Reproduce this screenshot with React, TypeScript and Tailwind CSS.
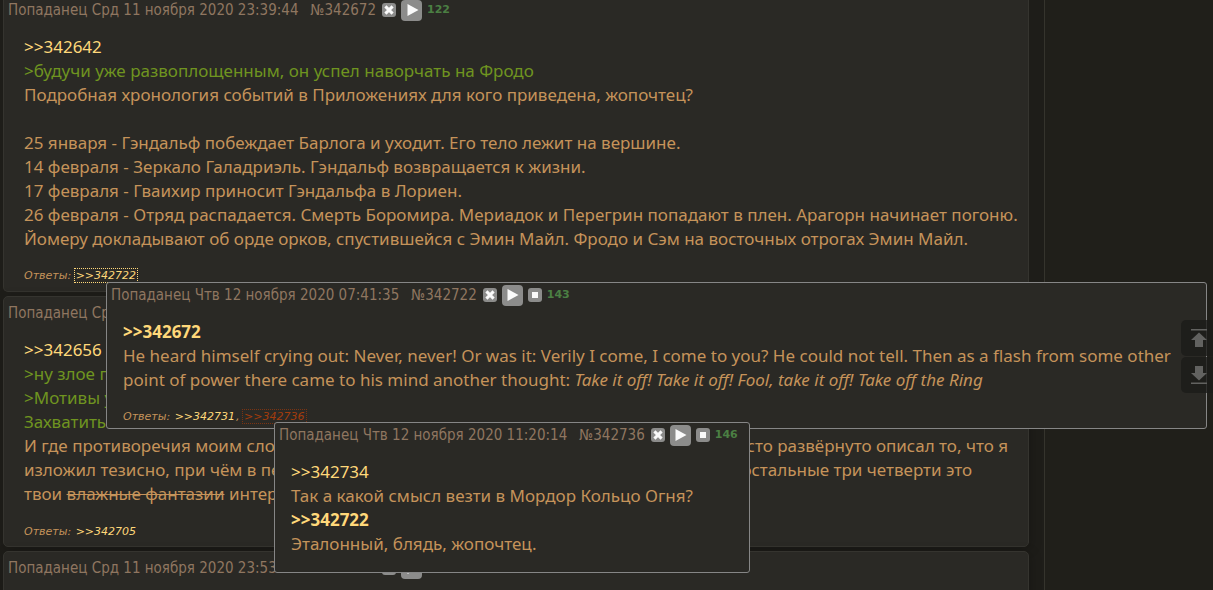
import React from "react";

const bodyText = "font-['Noto_Sans',sans-serif] text-[17px] leading-6 text-[#c5935a]";

function PostButton({ kind }: { kind: "hide" | "play" | "stop" }) {
  const label = { hide: "Скрыть пост", play: "Ответить на пост", stop: "Закрепить пост" }[kind];
  const big = kind === "play";
  return (
    <button
      type="button"
      aria-label={label}
      className={
        big
          ? "flex size-[21px] shrink-0 items-center justify-center rounded bg-[#8c8c8b]"
          : "flex size-3.5 shrink-0 items-center justify-center rounded-[3px] bg-[#8c8c8b]"
      }
    >
      {kind === "hide" && (
        <svg viewBox="0 0 14 14" className="size-3.5" stroke="#fafafa" strokeWidth="3">
          <path d="M3.4 3.4l7.2 7.2M10.6 3.4l-7.2 7.2" />
        </svg>
      )}
      {kind === "play" && (
        <svg viewBox="0 0 20 20" className="size-5" fill="#fafafa">
          <path d="M5.5 4l11 6-11 6z" />
        </svg>
      )}
      {kind === "stop" && (
        <svg viewBox="0 0 14 14" className="size-3.5" fill="#fafafa">
          <path d="M4 4h6v6H4z" />
        </svg>
      )}
    </button>
  );
}

function PostHeader({ date, id, count, pinned }: { date: string; id: string; count: string; pinned?: boolean }) {
  return (
    <header className="flex h-5 items-center whitespace-nowrap px-1 font-['DejaVu_Sans_Condensed','DejaVu_Sans',sans-serif] text-[15px] text-[#8f7660]">
      <span>Попаданец {date}</span>
      <a href={"#" + id} className="ml-3">№{id}</a>
      <span className="ml-1.5 flex items-center gap-[5px]">
        <PostButton kind="hide" />
        <PostButton kind="play" />
        {pinned && <PostButton kind="stop" />}
      </span>
      <span className="ml-[5px] font-['DejaVu_Sans',sans-serif] text-[11px] font-bold text-[#4b7f43]">{count}</span>
    </header>
  );
}

function Ref({ id, bold }: { id: string; bold?: boolean }) {
  return (
    <a href={"#" + id} className={bold ? "font-bold text-[#ffd87a]" : "text-[#ffd87a]"}>
      &gt;&gt;{id}
    </a>
  );
}

function Replies({ children }: { children: React.ReactNode }) {
  return (
    <p className="font-['DejaVu_Sans',sans-serif] text-[11px] italic leading-4 text-[#c5935a]">
      Ответы: {children}
    </p>
  );
}

function Quote({ children }: { children: React.ReactNode }) {
  return <span className="block whitespace-nowrap text-[#6f9420]">&gt;{children}</span>;
}

function SplitLine({ left, right }: { left: string; right: string }) {
  return (
    <div className="flex justify-between whitespace-nowrap">
      <span>{left}</span>
      <span>{right}</span>
    </div>
  );
}

const card =
  "rounded-[5px] border border-[#35342f] bg-[#2a2925] shadow-[2px_2px_12px_rgba(0,0,0,0.2)]";
const popup = "absolute rounded-[3px] border border-[#868686] bg-[#2a2925]";

export default function App() {
  return (
    <div className="relative flex h-screen overflow-hidden bg-[#201f1a]">
      <main className="min-w-0 flex-1 border-r border-[#35342d] bg-[#1e1d19] pl-[3px] pr-[15px]">
        <div className="flex flex-col gap-1">
          <article className="rounded-b-[5px] border border-t-0 border-[#35342f] bg-[#2a2925]">
            <PostHeader date="Срд 11 ноября 2020 23:39:44" id="342672" count="122" />
            <div className={bodyText + " px-5 pt-[15px]"}>
              <Ref id="342642" />
              <Quote>будучи уже развоплощенным, он успел наворчать на Фродо</Quote>
              <p>Подробная хронология событий в Приложениях для кого приведена, жопочтец?</p>
              <p className="mt-6">25 января - Гэндальф побеждает Барлога и уходит. Его тело лежит на вершине.</p>
              <p>14 февраля - Зеркало Галадриэль. Гэндальф возвращается к жизни.</p>
              <p>17 февраля - Гваихир приносит Гэндальфа в Лориен.</p>
              <p className="-mr-4">
                26 февраля - Отряд распадается. Смерть Боромира. Мериадок и Перегрин попадают в плен. Арагорн начинает погоню.
              </p>
              <p className="-mr-4">
                Йомеру докладывают об орде орков, спустившейся с Эмин Майл. Фродо и Сэм на восточных отрогах Эмин Майл.
              </p>
            </div>
            <div className="px-5 pb-[7px] pt-[17px]">
              <Replies>
                <a href="#342722" className="px-px text-[#ffd87a] outline-1 outline-dotted outline-[#ffd87a]">
                  &gt;&gt;342722
                </a>
              </Replies>
            </div>
          </article>

          <article className={card + " pt-1.5"}>
            <PostHeader date="Срд 11 ноября 2020 23:44:10" id="342691" count="123" />
            <div className={bodyText + " px-5 pt-[15px]"}>
              <Ref id="342656" />
              <Quote>ну злое г</Quote>
              <Quote>Мотивы у</Quote>
              <span className="block text-[#6f9420]">Захватить её себе и постепенно</span>
              <SplitLine left="И где противоречия моим слов" right="просто развёрнуто описал то, что я" />
              <div className="pr-9">
                <SplitLine left="изложил тезисно, при чём в пе" right="остальные три четверти это" />
              </div>
              <p>
                твои <s className="decoration-1">влажные фантазии</s> интер
              </p>
            </div>
            <div className="px-5 pb-1.5 pt-[18px]">
              <Replies>
                <a href="#342705" className="px-px text-[#ffd87a]">&gt;&gt;342705</a>
              </Replies>
            </div>
          </article>

          <article className={card + " pb-20 pt-1.5"}>
            <PostHeader date="Срд 11 ноября 2020 23:53:12" id="342694" count="124" />
          </article>
        </div>
      </main>
      <aside className="w-[168px] shrink-0" />

      <article className={popup + " left-[106px] right-1.5 top-[282px] pt-0.5"}>
        <PostHeader date="Чтв 12 ноября 2020 07:41:35" id="342722" count="143" pinned />
        <div className={bodyText + " px-4 pt-[15px]"}>
          <Ref id="342672" bold />
          <p>
            He heard himself crying out: Never, never! Or was it: Verily I come, I come to you? He could not tell. Then
            as a flash from some other point of power there came to his mind another thought:{" "}
            <em>Take it off! Take it off! Fool, take it off! Take off the Ring</em>
          </p>
        </div>
        <div className="px-4 pb-[3px] pt-[17px]">
          <Replies>
            <a href="#342731" className="px-px text-[#ffd87a]">&gt;&gt;342731</a>,{" "}
            <a href="#342736" className="px-px text-[#a33c0c] outline-1 outline-dotted outline-[#7a3413]">
              &gt;&gt;342736
            </a>
          </Replies>
        </div>
      </article>

      <article className={popup + " left-[274px] top-[422px] w-[476px] pb-4 pt-0.5"}>
        <PostHeader date="Чтв 12 ноября 2020 11:20:14" id="342736" count="146" pinned />
        <div className={bodyText + " px-4 pt-[15px]"}>
          <Ref id="342734" />
          <p>Так а какой смысл везти в Мордор Кольцо Огня?</p>
          <Ref id="342722" bold />
          <p>Эталонный, блядь, жопочтец.</p>
        </div>
      </article>

      <nav className="absolute right-0 top-80 flex flex-col gap-px">
        <button type="button" aria-label="Вверх" className="flex h-9 w-8 items-center rounded-l-[5px] bg-[#1b1b19]/80 pl-2.5">
          <svg viewBox="0 0 16 20" className="h-5 w-4" fill="#626260">
            <path d="M0 1h16v1.5H0zM8 4.5l8 7.5h-4v7H4v-7H0z" />
          </svg>
        </button>
        <button type="button" aria-label="Вниз" className="flex h-9 w-8 items-center rounded-l-[5px] bg-[#1b1b19]/80 pl-2.5">
          <svg viewBox="0 0 16 20" className="h-5 w-4" fill="#626260">
            <path d="M0 17.5h16V19H0zM8 15.5L0 8h4V1h8v7h4z" />
          </svg>
        </button>
      </nav>
    </div>
  );
}
